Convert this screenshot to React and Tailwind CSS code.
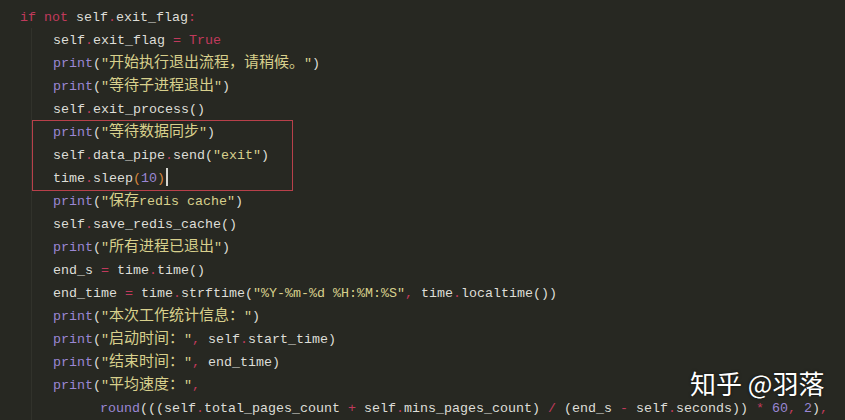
import React from "react";

// token colours, monokai-ish as captured in the screenshot
const TONE = {
  k: "text-[#c03a5c]",
  f: "text-[#9a87d4]",
  s: "text-[#d8d08c]",
  n: "text-[#9a87d4]",
  b: "text-[#d8893e]",
  p: "text-[#deded8]",
};

const CJK = /([\u3000-\u303f\u4e00-\u9fff\uff00-\uffef]+)/;

const Token = ({ type, text }) => {
  const parts = text.split(CJK).filter(Boolean);
  return (
    <span className={TONE[type]}>
      {parts.map((part, i) =>
        CJK.test(part) ? (
          <span
            key={i}
            className="font-['Noto_Sans_CJK_SC',sans-serif] text-[15px] leading-[15px]"
          >
            {part}
          </span>
        ) : (
          <React.Fragment key={i}>{part}</React.Fragment>
        )
      )}
    </span>
  );
};

const Line = ({ tokens, indent = "pl-[53px]", cursor }) => (
  <div className={`h-[23px] leading-[23px] whitespace-pre ${indent}`}>
    {tokens.map(([type, text], j) => (
      <Token key={j} type={type} text={text} />
    ))}
    {cursor && <span className="inline-block align-[-4px] ml-px w-[2px] h-[18px] bg-[#d6d6d0]" />}
  </div>
);

const head = [
  { indent: "pl-[20px]", t: [["k", "if not"], ["p", " self"], ["k", "."], ["p", "exit_flag"], ["k", ":"]] },
  { t: [["p", "self"], ["k", "."], ["p", "exit_flag "], ["k", "="], ["p", " "], ["k", "True"]] },
  { t: [["f", "print"], ["p", "("], ["s", "\"开始执行退出流程，请稍候。\""], ["p", ")"]] },
  { t: [["f", "print"], ["p", "("], ["s", "\"等待子进程退出\""], ["p", ")"]] },
  { t: [["p", "self"], ["k", "."], ["p", "exit_process()"]] },
];

// the three lines inside the red box
const boxed = [
  { t: [["f", "print"], ["p", "("], ["s", "\"等待数据同步\""], ["p", ")"]] },
  { t: [["p", "self"], ["k", "."], ["p", "data_pipe"], ["k", "."], ["p", "send("], ["s", "\"exit\""], ["p", ")"]] },
  { t: [["p", "time"], ["k", "."], ["p", "sleep"], ["b", "("], ["n", "10"], ["b", ")"]], cursor: true },
];

const tail = [
  { t: [["f", "print"], ["p", "("], ["s", "\"保存redis cache\""], ["p", ")"]] },
  { t: [["p", "self"], ["k", "."], ["p", "save_redis_cache()"]] },
  { t: [["f", "print"], ["p", "("], ["s", "\"所有进程已退出\""], ["p", ")"]] },
  { t: [["p", "end_s "], ["k", "="], ["p", " time"], ["k", "."], ["p", "time()"]] },
  {
    t: [
      ["p", "end_time "], ["k", "="], ["p", " time"], ["k", "."], ["p", "strftime("],
      ["s", "\"%Y-%m-%d %H:%M:%S\""], ["k", ","], ["p", " time"], ["k", "."], ["p", "localtime())"],
    ],
  },
  { t: [["f", "print"], ["p", "("], ["s", "\"本次工作统计信息：\""], ["p", ")"]] },
  { t: [["f", "print"], ["p", "("], ["s", "\"启动时间：\""], ["k", ","], ["p", " self"], ["k", "."], ["p", "start_time)"]] },
  { t: [["f", "print"], ["p", "("], ["s", "\"结束时间：\""], ["k", ","], ["p", " end_time)"]] },
  { t: [["f", "print"], ["p", "("], ["s", "\"平均速度：\""], ["k", ","]] },
  {
    indent: "pl-[100px]",
    t: [
      ["f", "round"], ["p", "(((self"], ["k", "."], ["p", "total_pages_count "], ["k", "+"],
      ["p", " self"], ["k", "."], ["p", "mins_pages_count) "], ["k", "/"], ["p", " (end_s "],
      ["k", "-"], ["p", " self"], ["k", "."], ["p", "seconds)) "], ["k", "*"], ["p", " "],
      ["n", "60"], ["k", ","], ["p", " "], ["n", "2"], ["p", ")"], ["k", ","],
    ],
  },
];

export default function App() {
  return (
    <div className="relative w-[845px] h-[420px] overflow-hidden bg-[#272822] font-['Liberation_Mono',monospace] text-[13.33px]">
      {/* indent guide */}
      <div className="absolute left-[31px] top-[28px] bottom-0 w-px bg-[#31322b]" />

      <div className="relative flex flex-col pt-[6px]">
        {head.map((l, i) => (
          <Line key={i} tokens={l.t} indent={l.indent} />
        ))}

        <div className="ml-[32px] w-[261px] -my-px border border-[#b8404a]">
          {boxed.map((l, i) => (
            <Line key={i} tokens={l.t} indent="pl-[20px]" cursor={l.cursor} />
          ))}
        </div>

        {tail.map((l, i) => (
          <Line key={i} tokens={l.t} indent={l.indent} />
        ))}
      </div>

      {/* watermark */}
      <div className="absolute left-[690px] top-[370px] font-['Noto_Sans_CJK_SC',sans-serif] text-[26px] leading-none text-white [text-shadow:0_0_3px_rgba(0,0,0,0.7)]">
        知乎 @羽落
      </div>
    </div>
  );
}
